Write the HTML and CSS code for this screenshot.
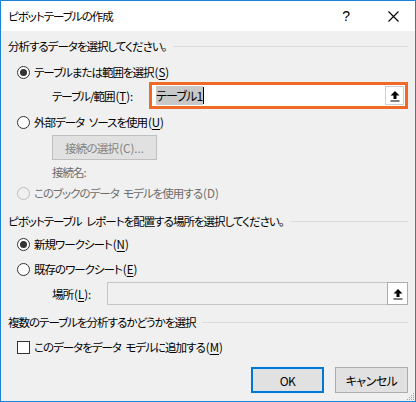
FILE: index.html
```html
<!DOCTYPE html>
<html lang="ja">
<head>
  <meta charset="UTF-8" />
  <title>ピボットテーブルの作成</title>
  <link rel="stylesheet" href="styles.css">
</head>
<body>
  <div class="dialog">
    <div class="titlebar">
      <span class="title">ピボットテーブルの作成</span>
      <span class="help">?</span>
      <svg class="close" width="11" height="11" viewBox="0 0 11 11">
        <path d="M0.5 0.5 L10.5 10.5 M10.5 0.5 L0.5 10.5" stroke="#000" stroke-width="1.1" fill="none"/>
      </svg>
    </div>

    <div class="content">
      <div class="group g1">分析するデータを選択してください。</div>

      <label class="option r1"><span class="radio checked"></span>テーブルまたは範囲を選択<span class="key">(<u>S</u>)</span></label>

      <div class="field f1">
        <span class="field-label">テーブル/範囲<span class="key">(<u>T</u>):</span></span>
        <div class="ref-box active">
          <span class="ref-text"><span class="sel">テーブル1</span><span class="caret"></span></span>
          <span class="ref-btn">
            <svg width="12" height="12" viewBox="0 0 12 12"><path d="M6 1 L1.5 5.5 H4.5 V9 H7.5 V5.5 H10.5 Z M1.5 10.5 H10.5 V11.5 H1.5 Z" fill="#000"/></svg>
          </span>
        </div>
      </div>

      <label class="option r2"><span class="radio"></span>外部データ ソースを使用<span class="key">(<u>U</u>)</span></label>

      <button class="btn-disabled">接続の選択<span class="key">(C)...</span></button>
      <div class="conn-name">接続名:</div>

      <label class="option r3 disabled"><span class="radio"></span>このブックのデータ モデルを使用する<span class="key">(D)</span></label>

      <div class="group g2">ピボットテーブル レポートを配置する場所を選択してください。</div>

      <label class="option r4"><span class="radio checked"></span>新規ワークシート<span class="key">(<u>N</u>)</span></label>
      <label class="option r5"><span class="radio"></span>既存のワークシート<span class="key">(<u>E</u>)</span></label>

      <div class="field f2">
        <span class="field-label">場所<span class="key">(<u>L</u>):</span></span>
        <div class="ref-box off">
          <span class="ref-text"></span>
          <span class="ref-btn">
            <svg width="12" height="12" viewBox="0 0 12 12"><path d="M6 1 L1.5 5.5 H4.5 V9 H7.5 V5.5 H10.5 Z M1.5 10.5 H10.5 V11.5 H1.5 Z" fill="#000"/></svg>
          </span>
        </div>
      </div>

      <div class="group g3">複数のテーブルを分析するかどうかを選択</div>

      <label class="option r6"><span class="check"></span>このデータをデータ モデルに追加する<span class="key">(<u>M</u>)</span></label>

      <div class="actions">
        <button class="btn default">OK</button>
        <button class="btn">キャンセル</button>
      </div>
    </div>

    <svg class="grip" width="10" height="10" viewBox="0 0 10 10">
      <g fill="#a0a0a0">
        <rect x="8" y="2" width="1" height="1"/><rect x="6" y="4" width="1" height="1"/><rect x="8" y="4" width="1" height="1"/>
        <rect x="4" y="6" width="1" height="1"/><rect x="6" y="6" width="1" height="1"/><rect x="8" y="6" width="1" height="1"/>
        <rect x="2" y="8" width="1" height="1"/><rect x="4" y="8" width="1" height="1"/><rect x="6" y="8" width="1" height="1"/><rect x="8" y="8" width="1" height="1"/>
      </g>
    </svg>
  </div>
</body>
</html>
```

FILE: styles.css
```css
body {
  margin: 0;
  font-family: "Noto Sans CJK JP", "Noto Sans", sans-serif;
  font-size: 11.5px;
  font-feature-settings: "palt";
  letter-spacing: -1px;
  word-spacing: 3px;
  color: #000;
  background: #fff;
}

.dialog {
  position: relative;
  width: 416px;
  height: 402px;
  box-sizing: border-box;
  border: 1px solid #1883d7;
  background: #f0f0f0;
  overflow: hidden;
}

.titlebar {
  height: 30px;
  background: #fff;
  display: flex;
  align-items: center;
  padding-left: 7px;
}

.title {
  flex: 1;
}

.help {
  font-family: "Liberation Sans", sans-serif;
  font-size: 14px;
  letter-spacing: 0;
  margin-right: 38px;
}

.close {
  margin-right: 16px;
}

.content {
  padding: 0 7px;
  display: flex;
  flex-direction: column;
}

/* access-key suffixes keep normal latin spacing */
.key {
  letter-spacing: 0;
  margin-left: 1px;
}

/* group captions with a rule to the right edge */
.group {
  height: 18px;
  line-height: 18px;
  display: flex;
  align-items: center;
  white-space: nowrap;
}

.group::after {
  content: "";
  flex: 1;
  height: 1px;
  background: #dcdcdc;
  margin-left: 7px;
}

.g1 { margin-top: 6px; }
.g2 { margin-top: 10px; }
.g3 { margin-top: 8px; }

.option {
  height: 18px;
  display: flex;
  align-items: center;
  margin-left: 9px;
  white-space: nowrap;
}

.r1 { margin-top: 8px; }
.r2 { margin-top: 4px; }
.r3 { margin-top: 3px; }
.r4 { margin-top: 5px; }
.r5 { margin-top: 7px; }
.r6 { margin-top: 7px; }

.option.disabled {
  color: #6d6d6d;
}

.radio {
  width: 11px;
  height: 11px;
  border: 1px solid #333;
  border-radius: 50%;
  background: #fff;
  margin-right: 4px;
  position: relative;
  flex: none;
}

.radio.checked::after {
  content: "";
  position: absolute;
  left: 2px;
  top: 2px;
  width: 7px;
  height: 7px;
  border-radius: 50%;
  background: #333;
}

.disabled .radio {
  border-color: #bcbcbc;
  background: #f0f0f0;
}

.check {
  width: 11px;
  height: 11px;
  border: 1px solid #333;
  background: #fff;
  margin-right: 4px;
  flex: none;
}

u {
  text-decoration-thickness: 1px;
  text-underline-offset: 2px;
}

.field {
  display: flex;
  align-items: center;
}

.field-label {
  margin-left: 44px;
  white-space: nowrap;
}

.f1 {
  margin-top: 1px;
  height: 27px;
}

.f1 .field-label {
  width: 97px;
}

.f2 {
  margin-top: 4px;
  height: 23px;
}

.f2 .field-label {
  width: 55px;
}

.ref-box {
  flex: 1;
  display: flex;
  box-sizing: border-box;
  align-self: stretch;
}

.ref-box.active {
  border: 3px solid #f06a27;
  background: #fff;
  padding: 1px 1px 1px 4px;
}

.ref-box.off {
  border: 1px solid #c6c6c6;
  background: #f0f0f0;
}

.ref-text {
  flex: 1;
  display: flex;
  align-items: center;
}

.sel {
  background: #c8c8c8;
  line-height: 19px;
  padding-right: 1px;
  font-size: 12px;
  letter-spacing: -0.8px;
}

.caret {
  width: 1px;
  height: 17px;
  background: #000;
}

.ref-btn {
  width: 19px;
  display: flex;
  align-items: center;
  justify-content: center;
  background: #fff;
  border: 1px solid #d0d0d0;
  box-sizing: border-box;
}

.off .ref-btn {
  width: 21px;
  margin: -1px -1px -1px 0;
  border-color: #adadad;
}

.btn-disabled {
  margin: 4px 0 0 44px;
  width: 105px;
  height: 25px;
  font: inherit;
  font-feature-settings: "palt";
  letter-spacing: -0.8px;
  color: #838383;
  background: #e1e1e1;
  border: 1px solid #bfbfbf;
  padding: 0;
}

.conn-name {
  margin: 3px 0 0 44px;
  height: 18px;
  line-height: 18px;
  color: #6d6d6d;
}

.actions {
  margin-top: 11px;
  display: flex;
  justify-content: flex-end;
  gap: 11px;
}

.btn {
  width: 73px;
  height: 26px;
  font: inherit;
  font-size: 12px;
  font-feature-settings: "palt";
  letter-spacing: -0.5px;
  background: #e1e1e1;
  border: 1px solid #adadad;
  padding: 0;
  color: #000;
}

.btn.default {
  border: 2px solid #0078d7;
}

.grip {
  position: absolute;
  right: 0;
  bottom: 0;
}
```
